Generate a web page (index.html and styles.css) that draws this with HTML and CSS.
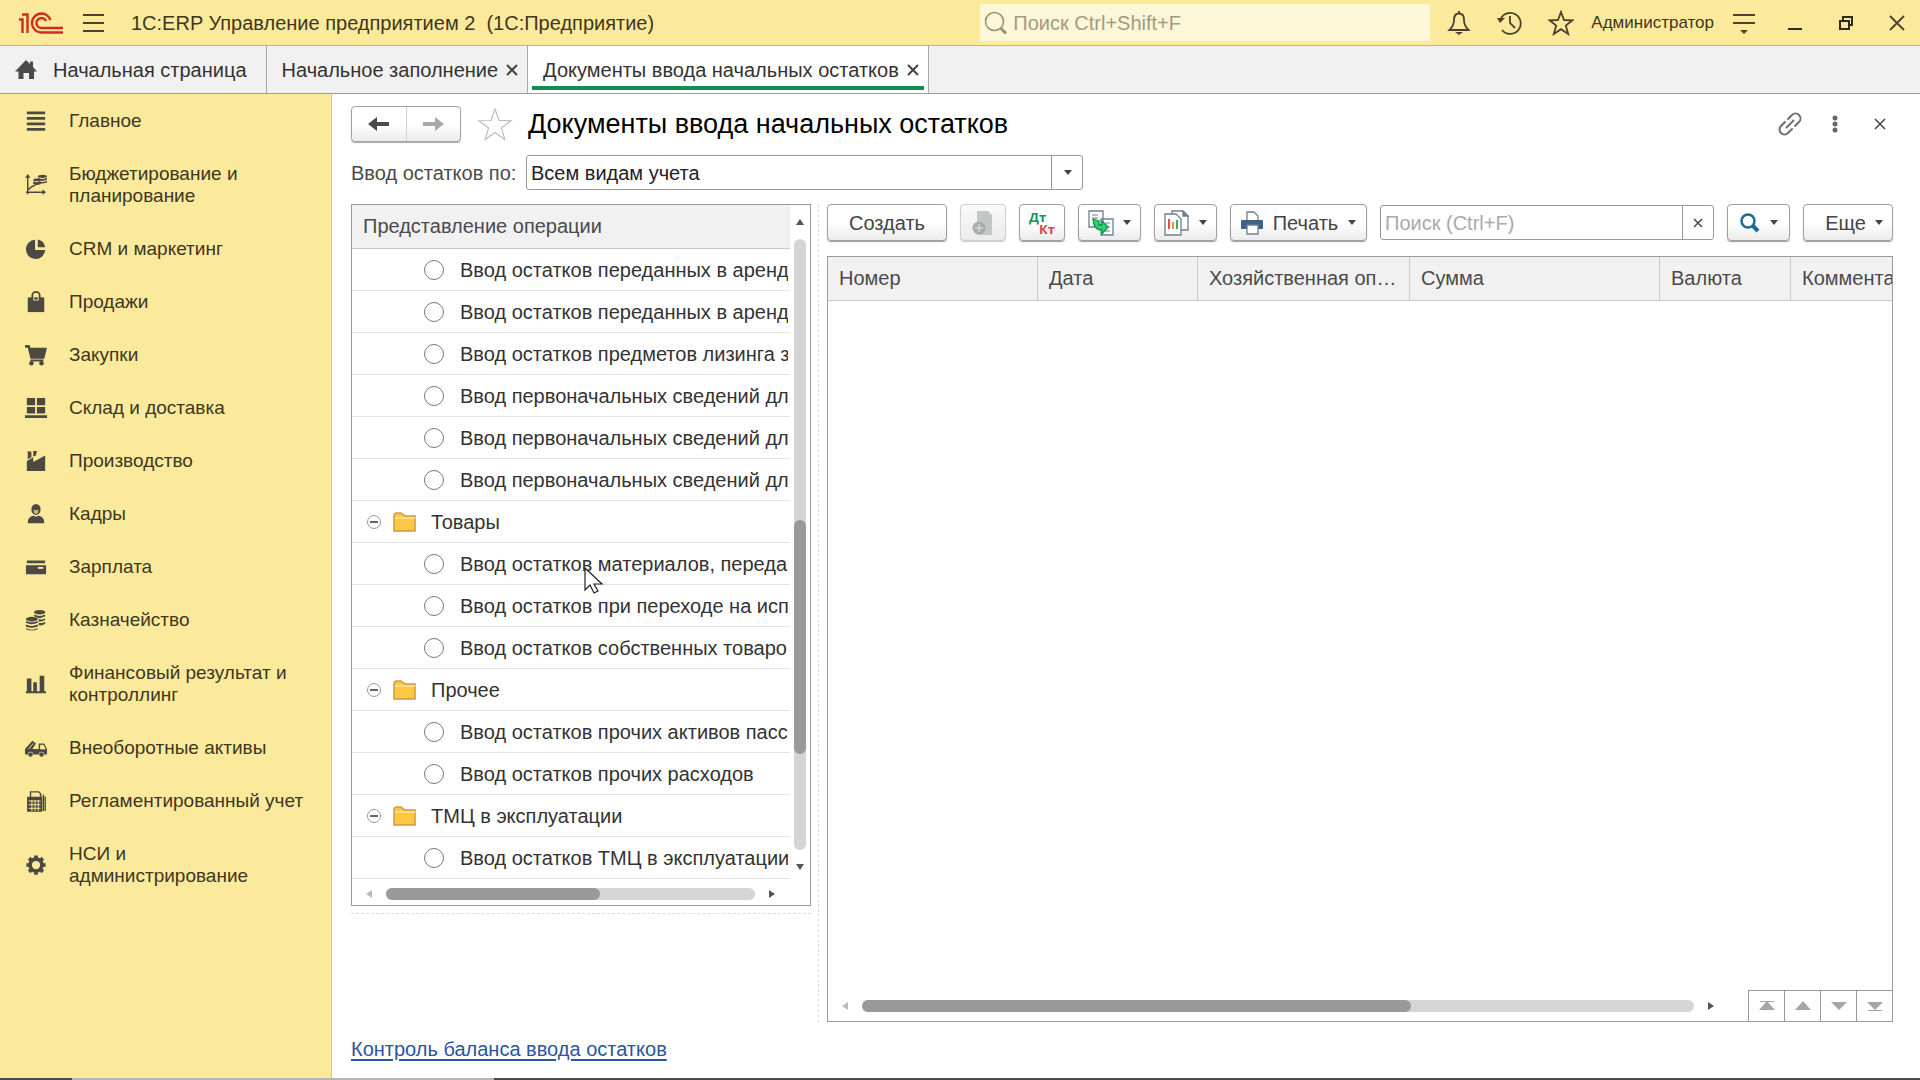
FILE: index.html
```html
<!DOCTYPE html>
<html lang="ru">
<head>
<meta charset="utf-8">
<title>1С:ERP Управление предприятием 2</title>
<link rel="stylesheet" href="styles.css">
</head>
<body>
<header class="topbar">
  <svg class="logo" viewBox="0 0 44 22" width="44" height="22" fill="none" stroke="#d32a1e" stroke-width="2.400">
    <path d="M0 7.500h3.500V21M3 2.500h5.500V21"/>
    <path d="M31.500 8A9.500 9.500 0 1 0 23 20.500H44"/><path d="M27 9A5 5 0 1 0 23 16H44"/>
  </svg>
  <button class="icon-btn menu-btn" aria-label="Меню"><svg width="22" height="20" viewBox="0 0 22 20" stroke="#4b412c" stroke-width="2"><path d="M0 2h21M0 10h21M0 18h21"/></svg></button>
  <h1 class="app-title">1С:ERP Управление предприятием 2&nbsp; (1С:Предприятие)</h1>
  <label class="global-search">
    <svg width="24" height="24" viewBox="0 0 24 24" fill="none" stroke="#98906f"><circle cx="10.500" cy="10.500" r="9" stroke-width="1.500"/><path d="M17 17.500l5 5" stroke-width="3"/></svg>
    <input type="text" placeholder="Поиск Ctrl+Shift+F" aria-label="Поиск">
  </label>
  <div class="top-actions">
    <button class="icon-btn" aria-label="Уведомления"><svg width="24" height="26" viewBox="0 0 24 26" fill="none" stroke="#4b412c" stroke-width="1.800"><path d="M12 3.500c-4 0-5 3-5 6.500 0 5-1.500 7-4.500 10h19c-3-3-4.500-5-4.500-10 0-3.500-1-6.500-5-6.500z"/><path d="M12 1v3"/><path d="M8 22h8l-4 3z" fill="#4b412c" stroke="none"/></svg></button>
    <button class="icon-btn" aria-label="История"><svg width="26" height="26" viewBox="0 0 26 26" fill="none" stroke="#4b412c" stroke-width="1.800"><path d="M3.500 9.500A10.500 10.500 0 1 1 5 20"/><path d="M13 6v7l5 5"/><path d="M0 8h8l-5 5z" fill="#4b412c" stroke="none"/></svg></button>
    <button class="icon-btn" aria-label="Избранное"><svg width="26" height="26" viewBox="0 0 26 26" fill="none" stroke="#4b412c" stroke-width="1.800"><path d="M13 2l3 8 8.500.300-6.700 5.300 2.400 8.400-7.200-4.800L5.800 24l2.400-8.400L1.500 10.300 10 10z"/></svg></button>
  </div>
  <a class="user" href="#">Администратор</a>
  <div class="window-actions">
    <button class="icon-btn" aria-label="Настройки"><svg width="22" height="24" viewBox="0 0 22 24" stroke="#4b412c" stroke-width="1.800"><path d="M0 4h22M0 12h22"/><path d="M7 19h8l-4 4z" fill="#4b412c" stroke="none"/></svg></button>
    <button class="icon-btn" aria-label="Свернуть"><svg width="14" height="24" viewBox="0 0 14 24" stroke="#2f2a1e" stroke-width="2"><path d="M0 18h14"/></svg></button>
    <button class="icon-btn" aria-label="Восстановить"><svg width="14" height="16" viewBox="0 0 14 16" fill="none" stroke="#2f2a1e" stroke-width="2"><path d="M1 6h9v8H1zM4 5V2h9v8h-3"/></svg></button>
    <button class="icon-btn" aria-label="Закрыть"><svg width="16" height="16" viewBox="0 0 16 16" stroke="#4b412c" stroke-width="1.800"><path d="M1 1l14 14M15 1L1 15"/></svg></button>
  </div>
</header>

<nav class="tabs">
  <a class="tab tab-home" href="#"><svg width="22" height="20" viewBox="0 0 22 20" fill="#4a4a4a"><path d="M11 0l4 4V1.500h3V7l4 4.500h-3V19h-5v-6H8.500v6h-5v-7.500H0z"/></svg>Начальная страница</a>
  <a class="tab" href="#">Начальное заполнение <svg class="tab-x" width="12" height="12" viewBox="0 0 12 12"><path d="M1 1l10 10M11 1L1 11"/></svg></a>
  <a class="tab tab-active" href="#">Документы ввода начальных остатков <svg class="tab-x" width="12" height="12" viewBox="0 0 12 12"><path d="M1 1l10 10M11 1L1 11"/></svg></a>
</nav>

<div class="workspace">
  <nav class="sidebar">
    <a href="#"><svg viewBox="0 0 24 24" stroke="#4d4842" stroke-width="3"><path d="M2 3h20M2 9h20M2 15h20M2 21h20"/></svg>Главное</a>
    <a href="#"><svg viewBox="0 0 24 24" fill="none" stroke="#4d4842" stroke-width="1.600"><path d="M3 3v19M1 20h20M4 17c3-5 6-3 8-6"/><path d="M0 4l3-4 3 4zM19 17l4 3-4 3z" fill="#4d4842" stroke="none"/><g fill="#4d4842" stroke="none"><ellipse cx="19" cy="2.500" rx="5" ry="1.800"/><path d="M14 4q5 3 10 0v2q-5 3-10 0zM15 8q5 2 9-1v2q-4 2-9 1z"/><ellipse cx="13" cy="6.500" rx="4" ry="1.500"/><path d="M9 8q4 2 8 0v3q-4 2-8 0z"/></g></svg>Бюджетирование и<br>планирование</a>
    <a href="#"><svg viewBox="0 0 24 24" fill="#4d4842"><path d="M11 2v11h11A10.500 10.500 0 1 1 11 2z"/><path d="M14 1.500A10 10 0 0 1 22 10h-8z"/></svg>CRM и маркетинг</a>
    <a href="#"><svg viewBox="0 0 24 24" fill="#4d4842"><path d="M3 7h18v16H3z"/><path d="M8 11V5a4 4 0 0 1 8 0v6" fill="none" stroke="#4d4842" stroke-width="2"/><path d="M9.500 7v3h5V7" fill="none" stroke="#fbea9c" stroke-width="1"/></svg>Продажи</a>
    <a href="#"><svg viewBox="0 0 24 24" fill="#4d4842"><path d="M0 1h5l1 3h18l-3 12H6L3 4H0zM6 17h14v2H6z"/><circle cx="7" cy="21" r="2.500"/><circle cx="18" cy="21" r="2.500"/></svg>Закупки</a>
    <a href="#"><svg viewBox="0 0 24 24" fill="#4d4842"><path d="M2 1h9v8H2zM13 1h9v8h-9zM2 11h9v7H2zM13 11h9v7h-9zM0 20h24v3H0z"/></svg>Склад и доставка</a>
    <a href="#"><svg viewBox="0 0 24 24" fill="#4d4842"><path d="M2 12l7-4v5l13-7v17H2zM3 1l4 1v6l-4 2zM9 1h4l-1 5-3 1z"/></svg>Производство</a>
    <a href="#"><svg viewBox="0 0 24 24" fill="#4d4842"><ellipse cx="12" cy="7" rx="5" ry="6"/><path d="M9.500 7q2.500 1.500 5 0 0 5-2.500 5t-2.500-5z" fill="#c3b782"/><path d="M3 22c0-6 3-7 6-8l3 1 3-1c3 1 6 2 6 8z"/></svg>Кадры</a>
    <a href="#"><svg viewBox="0 0 24 24" fill="#4d4842"><path d="M2 5h20v3H2zM1 10h22v10H1z"/><path d="M14 12h6v2h-6z" fill="#fbea9c"/></svg>Зарплата</a>
    <a href="#"><svg viewBox="0 0 24 24" fill="#4d4842"><ellipse cx="16" cy="3.500" rx="6" ry="2.500"/><path d="M10 6q6 3 12 0v2q-3 2-7 2l-5-2zM15 11q4 1 7-1v2q-3 2-7 2zM15 15q4 1 7-1v2q-3 2-7 2z"/><ellipse cx="7.500" cy="11" rx="6.500" ry="2.500"/><path d="M1 13q6 3 13 0v2q-7 3-13 0zM1 17q6 3 13 0v2q-7 3-13 0zM1 21q6 3 13 0v1q-7 3-13 0z"/></svg>Казначейство</a>
    <a href="#"><svg viewBox="0 0 24 24" fill="#4d4842"><path d="M2 6h5v14H2zM9 10h4v10H9zM16 3h5v17h-5zM1 20h22v2H1z"/></svg>Финансовый результат и<br>контроллинг</a>
    <a href="#"><svg viewBox="0 0 24 24" fill="#4d4842"><path d="M0 13l8-9 4 3-4 6h7V7h6l3 6v6h-3a3 3 0 0 0-6 0H9a3 3 0 0 0-6 0H0z"/><path d="M17 9h3l2 4h-5zM9 7L4 13" fill="#fbea9c" stroke="#fbea9c"/><circle cx="6" cy="19" r="2.500"/><circle cx="18" cy="19" r="2.500"/></svg>Внеоборотные активы</a>
    <a href="#"><svg viewBox="0 0 24 24" fill="none" stroke="#4d4842" stroke-width="1.500"><path d="M6 8V2h9l2 2v4M20 5v18M22 7v16"/><path d="M3 8h15v15H3z" fill="#4d4842"/><path d="M4 12h13M4 16h13M4 20h13M7.500 11v12M11 11v12M14.500 11v12" stroke="#fbea9c" stroke-width="1"/></svg>Регламентированный учет</a>
    <a href="#"><svg viewBox="0 0 24 24" fill="none" stroke="#4d4842"><circle cx="12" cy="12" r="6.500" stroke-width="4"/><path d="M12 1.500v3M12 19.500v3M1.500 12h3M19.500 12h3M4.500 4.500l2 2M17.500 17.500l2 2M4.500 19.500l2-2M17.500 6.500l2-2" stroke-width="4"/></svg>НСИ и<br>администрирование</a>
  </nav>

  <main class="page">
    <div class="page-head">
      <div class="history">
        <button aria-label="Назад"><svg width="22" height="16" viewBox="0 0 22 16" fill="#4a4a4a"><path d="M0 8l9-7v5h12v4H9v5z"/></svg></button>
        <button aria-label="Вперед"><svg width="22" height="16" viewBox="0 0 22 16" fill="#a9a9a9"><path d="M22 8l-9-7v5H1v4h12v5z"/></svg></button>
      </div>
      <button class="icon-btn fav" aria-label="В избранное"><svg width="36" height="34" viewBox="0 0 36 34" fill="#fff" stroke="#bdbdbd" stroke-width="1.200"><path d="M18 2l4 11.500 12 .2-9.600 7.300 3.400 11.500L18 25.500 8.200 32.500 11.600 21 2 13.700l12-.2z"/></svg></button>
      <h2>Документы ввода начальных остатков</h2>
      <div class="page-tools">
        <button class="icon-btn" aria-label="Ссылка"><svg width="24" height="24" viewBox="0 0 24 24" fill="none" stroke="#6f6f6f" stroke-width="2" stroke-linecap="round"><path d="M10 7l4-4a4.500 4.500 0 0 1 7 7l-4 4M14 17l-4 4a4.500 4.500 0 0 1-7-7l4-4M8.500 15.500l7-7"/></svg></button>
        <button class="icon-btn" aria-label="Действия"><svg width="6" height="18" viewBox="0 0 6 18" fill="#666"><circle cx="3" cy="3" r="2.500"/><circle cx="3" cy="9" r="2.500"/><circle cx="3" cy="15" r="2.500"/></svg></button>
        <button class="icon-btn" aria-label="Закрыть форму"><svg width="12" height="12" viewBox="0 0 12 12" stroke="#444" stroke-width="1.500"><path d="M1 1l10 10M11 1L1 11"/></svg></button>
      </div>
    </div>

    <div class="filter">
      <label for="kind">Ввод остатков по:</label>
      <div class="combo">
        <select id="kind"><option>Всем видам учета</option></select>
        <span class="combo-arrow"><i class="caret"></i></span>
      </div>
    </div>

    <div class="panes">
      <section class="left">
        <div class="tree">
          <div class="tree-body">
            <div class="tree-rows">
            <table>
              <thead><tr><th>Представление операции</th></tr></thead>
              <tbody>
                <tr><td><label><input type="radio" name="op">Ввод остатков переданных в аренду</label></td></tr>
                <tr><td><label><input type="radio" name="op">Ввод остатков переданных в аренду</label></td></tr>
                <tr><td><label><input type="radio" name="op">Ввод остатков предметов лизинга за</label></td></tr>
                <tr><td><label><input type="radio" name="op">Ввод первоначальных сведений для</label></td></tr>
                <tr><td><label><input type="radio" name="op">Ввод первоначальных сведений для</label></td></tr>
                <tr><td><label><input type="radio" name="op">Ввод первоначальных сведений для</label></td></tr>
                <tr><td><div class="group"><button class="fold" aria-label="Свернуть"></button><svg width="24" height="20" viewBox="0 0 24 20"><path d="M1 4q0-3 3-3h4l4 3h10v15H1z" fill="#fdc746" stroke="#cf9a3c" stroke-width="1.500"/><path d="M2 6h20" stroke="#ffe08a" stroke-width="2"/></svg>Товары</div></td></tr>
                <tr><td><label><input type="radio" name="op">Ввод остатков материалов, переданных</label></td></tr>
                <tr><td><label><input type="radio" name="op">Ввод остатков при переходе на использование</label></td></tr>
                <tr><td><label><input type="radio" name="op">Ввод остатков собственных товаров</label></td></tr>
                <tr><td><div class="group"><button class="fold" aria-label="Свернуть"></button><svg width="24" height="20" viewBox="0 0 24 20"><path d="M1 4q0-3 3-3h4l4 3h10v15H1z" fill="#fdc746" stroke="#cf9a3c" stroke-width="1.500"/><path d="M2 6h20" stroke="#ffe08a" stroke-width="2"/></svg>Прочее</div></td></tr>
                <tr><td><label><input type="radio" name="op">Ввод остатков прочих активов пассивов</label></td></tr>
                <tr><td><label><input type="radio" name="op">Ввод остатков прочих расходов</label></td></tr>
                <tr><td><div class="group"><button class="fold" aria-label="Свернуть"></button><svg width="24" height="20" viewBox="0 0 24 20"><path d="M1 4q0-3 3-3h4l4 3h10v15H1z" fill="#fdc746" stroke="#cf9a3c" stroke-width="1.500"/><path d="M2 6h20" stroke="#ffe08a" stroke-width="2"/></svg>ТМЦ в эксплуатации</div></td></tr>
                <tr><td><label><input type="radio" name="op">Ввод остатков ТМЦ в эксплуатации</label></td></tr>
              </tbody>
            </table>
            </div>
            <div class="vscroll"><i class="arrow up"></i><div class="vtrack"><div class="vthumb"></div></div><i class="arrow down"></i></div>
          </div>
          <div class="hscroll"><i class="arrow left-off"></i><div class="htrack"><div class="hthumb"></div></div><i class="arrow right-on"></i></div>
        </div>
      </section>

      <section class="right">
        <div class="toolbar">
          <button class="btn btn-create">Создать</button>
          <button class="btn btn-icon" disabled aria-label="Создать копированием"><svg width="26" height="26" viewBox="0 0 26 26"><path d="M7 1h11l4 4v20H7z" fill="#c4c6c6"/><circle cx="9" cy="18" r="6.500" fill="#a9acac"/><path d="M5 18h8M9 14v8" stroke="#d6d8d8" stroke-width="1.500"/></svg></button>
          <button class="btn btn-icon" aria-label="Проводки"><span class="dtkt"><span class="dt">Дт</span><span class="kt">Кт</span></span></button>
          <button class="btn btn-drop" aria-label="Создать на основании"><svg width="26" height="26" viewBox="0 0 26 26" fill="#fff" stroke="#6d7f92" stroke-width="1.300"><path d="M1 1h14v16H1zM13 9h12v16H13z"/><path d="M4 5h6M4 8h6M17 13h5M19 17h3M17 21h5" stroke-width="1"/><path d="M5 9l6 2v4h3v-4l6 6-6 7v-4c-6 0-9-5-9-11z" fill="#2bd46c" stroke="#14934a"/></svg><i class="caret"></i></button>
          <button class="btn btn-drop" aria-label="Отчеты"><svg width="26" height="26" viewBox="0 0 26 26" fill="#fff" stroke="#6d7f92" stroke-width="1.300"><path d="M8 1h11l5 5v14H8z"/><path d="M19 1v5h5z" fill="#6d7f92"/><path d="M1 4h11l5 5v16H1z"/><path d="M5 9v10" stroke="#e0534a" stroke-width="2"/><path d="M9 12v7" stroke="#e9963a" stroke-width="2"/><path d="M13 10v9" stroke="#4aa564" stroke-width="2"/></svg><i class="caret"></i></button>
          <button class="btn btn-print"><svg width="22" height="24" viewBox="0 0 22 24"><path d="M6 9V1h7l4 4v4" fill="#fff" stroke="#6d7f92" stroke-width="1.300"/><rect y="9" width="22" height="9" rx="1" fill="#3f618c"/><path d="M6 14h11v9H6z" fill="#fff" stroke="#6d7f92" stroke-width="1.300"/></svg>Печать<i class="caret"></i></button>
          <div class="search"><input type="text" placeholder="Поиск (Ctrl+F)" aria-label="Поиск в списке"><button aria-label="Очистить"><svg width="10" height="10" viewBox="0 0 10 10" stroke="#444" stroke-width="1.500"><path d="M1 1l8 8M9 1L1 9"/></svg></button></div>
          <button class="btn btn-drop" aria-label="Найти"><svg width="22" height="22" viewBox="0 0 22 22" fill="none" stroke="#1f6a96"><circle cx="9" cy="9" r="6.500" stroke-width="2.500"/><path d="M14 14l5 5" stroke-width="4"/></svg><i class="caret"></i></button>
          <button class="btn btn-more">Еще<i class="caret"></i></button>
        </div>
        <div class="docs">
          <table>
            <colgroup><col class="c-num"><col class="c-date"><col class="c-op"><col class="c-sum"><col class="c-cur"><col></colgroup>
            <thead><tr><th>Номер</th><th>Дата</th><th>Хозяйственная операция</th><th>Сумма</th><th>Валюта</th><th class="clip">Комментарий</th></tr></thead>
          </table>
          <div class="docs-foot">
            <div class="hscroll"><i class="arrow left-off"></i><div class="htrack"><div class="hthumb wide"></div></div><i class="arrow right-on"></i></div>
            <div class="pager">
              <button aria-label="В начало"><svg width="16" height="12" viewBox="0 0 16 12" fill="#a6a6a6"><path d="M1 1h14v1H1zM8 1l8 9H0z"/></svg></button>
              <button aria-label="Вверх"><svg width="16" height="12" viewBox="0 0 16 12" fill="#a6a6a6"><path d="M8 1l8 9H0z"/></svg></button>
              <button aria-label="Вниз"><svg width="16" height="12" viewBox="0 0 16 12" fill="#a6a6a6"><path d="M0 2h16l-8 8z"/></svg></button>
              <button aria-label="В конец"><svg width="16" height="12" viewBox="0 0 16 12" fill="#a6a6a6"><path d="M0 2h16l-8 8zM1 10h14v1H1z"/></svg></button>
            </div>
          </div>
        </div>
      </section>
    </div>
    <a class="balance" href="#">Контроль баланса ввода остатков</a>
  </main>
</div>
<footer class="strip"><span></span></footer>

<svg class="pointer" width="20" height="30" viewBox="0 0 20 30" fill="#fff" stroke="#222" stroke-width="1.200"><path d="M1 1v22l5-5 4 8 4-2-4-7h8z"/></svg>
</body>
</html>
```
FILE: styles.css
```css
* { box-sizing: border-box; }
body {
  margin: 0;
  min-height: 100vh;
  display: flex;
  flex-direction: column;
  position: relative;
  font: 20px/24px "Liberation Sans", Arial, sans-serif;
  color: #333;
  background: #fff;
}
button, input, select { font: inherit; color: inherit; margin: 0; }
button { padding: 0; cursor: pointer; }
a { color: inherit; text-decoration: none; }
svg { flex: none; display: block; }
h1, h2 { margin: 0; font-weight: normal; }
.icon-btn { border: 0; background: none; display: flex; align-items: center; justify-content: center; }

.topbar {
  display: flex;
  align-items: center;
  height: 46px;
  padding: 0 12px 0 19px;
  background: #fbea9c;
  border-bottom: 1px solid #c3b777;
  color: #3f3620;
}
.menu-btn { margin: 0 26px 0 20px; }
.app-title { font-size: 20px; white-space: nowrap; }
.global-search {
  display: flex;
  align-items: center;
  gap: 5px;
  width: 450px;
  height: 37px;
  margin-left: auto;
  padding-left: 4px;
  background: #fef6d8;
}
.global-search input { flex: 1; min-width: 0; border: 0; padding: 0; background: none; outline: 0; }
.global-search input::placeholder { color: #a39b80; opacity: 1; }
.top-actions { display: flex; gap: 9px; padding: 0 9px 0 8px; }
.top-actions .icon-btn { width: 42px; }
.user { font-size: 17px; }
.window-actions { display: flex; align-items: center; margin: 0 -14px 0 4px; }
.window-actions .icon-btn { width: 51px; height: 24px; }

.tabs { display: flex; height: 48px; background: #f1f1f1; border-bottom: 1px solid #9a9a9a; }
.tab { display: flex; align-items: center; gap: 8px; padding: 0 9px 0 15px; border-right: 1px solid #a6a6a6; white-space: nowrap; }
.tab-home { gap: 16px; padding-right: 19px; }
.tab-active { background: #fff; box-shadow: inset 4px 0 #fff, inset -4px 0 #fff, inset 0 -3px #fff, inset 0 -7px #148c50; }
.tab-x { stroke: #444; stroke-width: 2; }

.workspace { flex: 1; display: flex; min-height: 0; }
.sidebar { flex: 0 0 332px; background: #fbea9c; border-right: 1px solid #d9c987; font-size: 19px; line-height: 22px; color: #3f3620; }
.sidebar a { display: grid; grid-template-columns: 24px 1fr; column-gap: 21px; align-items: center; padding: 16px 0 15px 24px; }
.sidebar a svg { width: 24px; height: 22px; grid-row: 1 / span 2; }

.page { flex: 1; min-width: 0; display: flex; flex-direction: column; padding: 12px 27px 17px 19px; }
.page-head { display: flex; align-items: center; height: 36px; }
.history { display: flex; width: 110px; height: 36px; border: 1px solid #a3a3a3; border-radius: 4px; background: linear-gradient(#fff 50%, #ececec); box-shadow: 0 1px 1px #a8a8a8; }
.history button { flex: 1; display: flex; align-items: center; justify-content: center; border: 0; background: none; }
.history button + button { border-left: 1px solid #d0d0d0; }
.fav { margin: 0 15px 0 16px; }
.page-head h2 { font-size: 27px; line-height: 36px; color: #000; white-space: nowrap; }
.page-tools { display: flex; margin-left: auto; margin-right: -9px; }
.page-tools .icon-btn { width: 45px; height: 24px; }

.filter { display: flex; align-items: center; margin-top: 13px; color: #4a4a4a; }
.filter label { width: 175px; white-space: nowrap; }
.combo { display: grid; width: 557px; }
.combo select, .combo-arrow { grid-area: 1 / 1; }
.combo select { appearance: none; height: 35px; padding: 0 36px 0 4px; border: 1px solid #999; border-radius: 3px; background: #fff; color: #222; }
.combo-arrow { justify-self: end; width: 32px; display: flex; align-items: center; justify-content: center; border-left: 1px solid #999; pointer-events: none; }
.caret { border: 4px solid transparent; border-top: 5px solid #444; border-bottom: 0; }

.panes { flex: 1; display: flex; margin-top: 14px; }
.left { flex: 0 0 468px; min-width: 0; padding-right: 7px; border-right: 1px dashed #ddd; }
.tree { border: 1px solid #9a9a9a; margin-bottom: 7px; }
.left::after { content: ""; display: block; border-top: 1px dashed #ddd; }
.tree-body { display: flex; }
.tree-rows { flex: 1; min-width: 0; overflow: hidden; }
.tree table { width: 100%; table-layout: fixed; border-collapse: separate; border-spacing: 0; }
.tree th { height: 44px; padding: 0 11px 2px; background: #f1f1f1; border-bottom: 1px solid #c9c9c9; text-align: left; font-weight: normal; color: #4a4a4a; }
.tree td { height: 42px; padding: 0; border-bottom: 1px solid #e2e2e2; }
.tree label { display: flex; align-items: center; margin-right: 2px; padding-left: 72px; overflow: hidden; white-space: nowrap; }
.tree input { flex: none; appearance: none; width: 20px; height: 20px; margin-right: 16px; border: 1px solid #777; border-radius: 50%; background: #fff; }
.group { display: flex; align-items: center; padding-left: 15px; white-space: nowrap; }
.group svg { margin: 0 14px 0 12px; }
.fold { display: flex; align-items: center; justify-content: center; width: 14px; height: 14px; border: 1px solid #999; border-radius: 50%; background: #fff; }
.fold::before { content: ""; width: 8px; height: 2px; background: #666; }

.vscroll { flex: none; display: flex; flex-direction: column; align-items: center; gap: 14px; width: 20px; padding: 14px 0 9px; }
.vtrack { flex: 1; width: 12px; border-radius: 6px; background: #d5d5d5; padding-top: 281px; }
.vthumb { height: 234px; border-radius: 6px; background: #999; }
.hscroll { display: flex; align-items: center; gap: 14px; }
.tree .hscroll { height: 26px; padding: 4px 35px 0 14px; }
.htrack { flex: 1; height: 12px; border-radius: 6px; background: #d5d5d5; }
.hthumb { width: 58%; height: 12px; border-radius: 6px; background: #999; }
.hthumb.wide { width: 66%; }
.arrow { flex: none; border: 4px solid transparent; }
.up { border-bottom: 6px solid #555; border-top: 0; }
.down { border-top: 6px solid #555; border-bottom: 0; }
.left-off { border-right: 6px solid #bbb; border-left: 0; }
.right-on { border-left: 6px solid #555; border-right: 0; }

.right { flex: 1; min-width: 0; display: flex; flex-direction: column; padding-left: 8px; }
.toolbar { display: flex; align-items: center; gap: 13px; height: 37px; color: #444; }
.btn { flex: none; display: flex; align-items: center; justify-content: center; height: 37px; border: 1px solid #a0a0a0; border-radius: 4px; background: linear-gradient(#fff 50%, #ebebeb); box-shadow: 0 1px 1px #999; }
.btn:disabled { border-color: #d0d0d0; box-shadow: 0 1px 1px #ccc; background: linear-gradient(#fafafa, #ebebeb); }
.btn-create { width: 120px; }
.btn-icon { width: 46px; }
.btn-drop { width: 63px; gap: 9px; }
.btn-print { width: 137px; gap: 10px; }
.btn-more { width: 90px; gap: 9px; padding-left: 12px; }
.dtkt { display: grid; width: 26px; font: bold 13px/12px "Open Sans", sans-serif; }
.dt { color: #15945a; justify-self: start; }
.kt { color: #e0404c; justify-self: end; }
.search { flex: 1; min-width: 0; display: flex; height: 35px; border: 1px solid #999; border-radius: 3px; background: #fff; }
.search input { flex: 1; min-width: 0; border: 0; padding: 0 4px; background: none; outline: 0; }
.search input::placeholder { color: #aaa; opacity: 1; }
.search button { width: 31px; display: flex; align-items: center; justify-content: center; border: 0; border-left: 1px solid #999; background: none; }

.docs { flex: 1; display: flex; flex-direction: column; justify-content: space-between; margin-top: 15px; border: 1px solid #9a9a9a; }
.docs table { width: 100%; table-layout: fixed; border-collapse: separate; border-spacing: 0; }
.docs th { height: 44px; padding: 0 11px 2px; background: #f1f1f1; border-right: 1px solid #c9c9c9; border-bottom: 1px solid #c9c9c9; text-align: left; font-weight: normal; color: #4a4a4a; white-space: nowrap; overflow: hidden; text-overflow: ellipsis; }
.docs th.clip { padding-right: 0; border-right: 0; text-overflow: clip; }
.c-num { width: 210px; }
.c-date { width: 160px; }
.c-op { width: 212px; }
.c-sum { width: 250px; }
.c-cur { width: 131px; }
.docs-foot { display: flex; }
.docs-foot .hscroll { flex: 1; padding: 0 34px 0 14px; }
.pager { display: flex; }
.pager button { width: 36px; height: 31px; display: flex; align-items: center; justify-content: center; border: 1px solid #9a9a9a; border-width: 1px 0 0 1px; background: #fff; }
.balance { align-self: flex-start; margin-top: 15px; color: #2a55a0; text-decoration: underline; text-underline-offset: 3px; }

.strip { height: 2px; background: #4a4a4a; }
.strip span { display: block; width: 22%; height: 2px; margin-left: 72px; background: #b5b5b5; }
.pointer { position: absolute; left: 584px; top: 567px; pointer-events: none; }
```
